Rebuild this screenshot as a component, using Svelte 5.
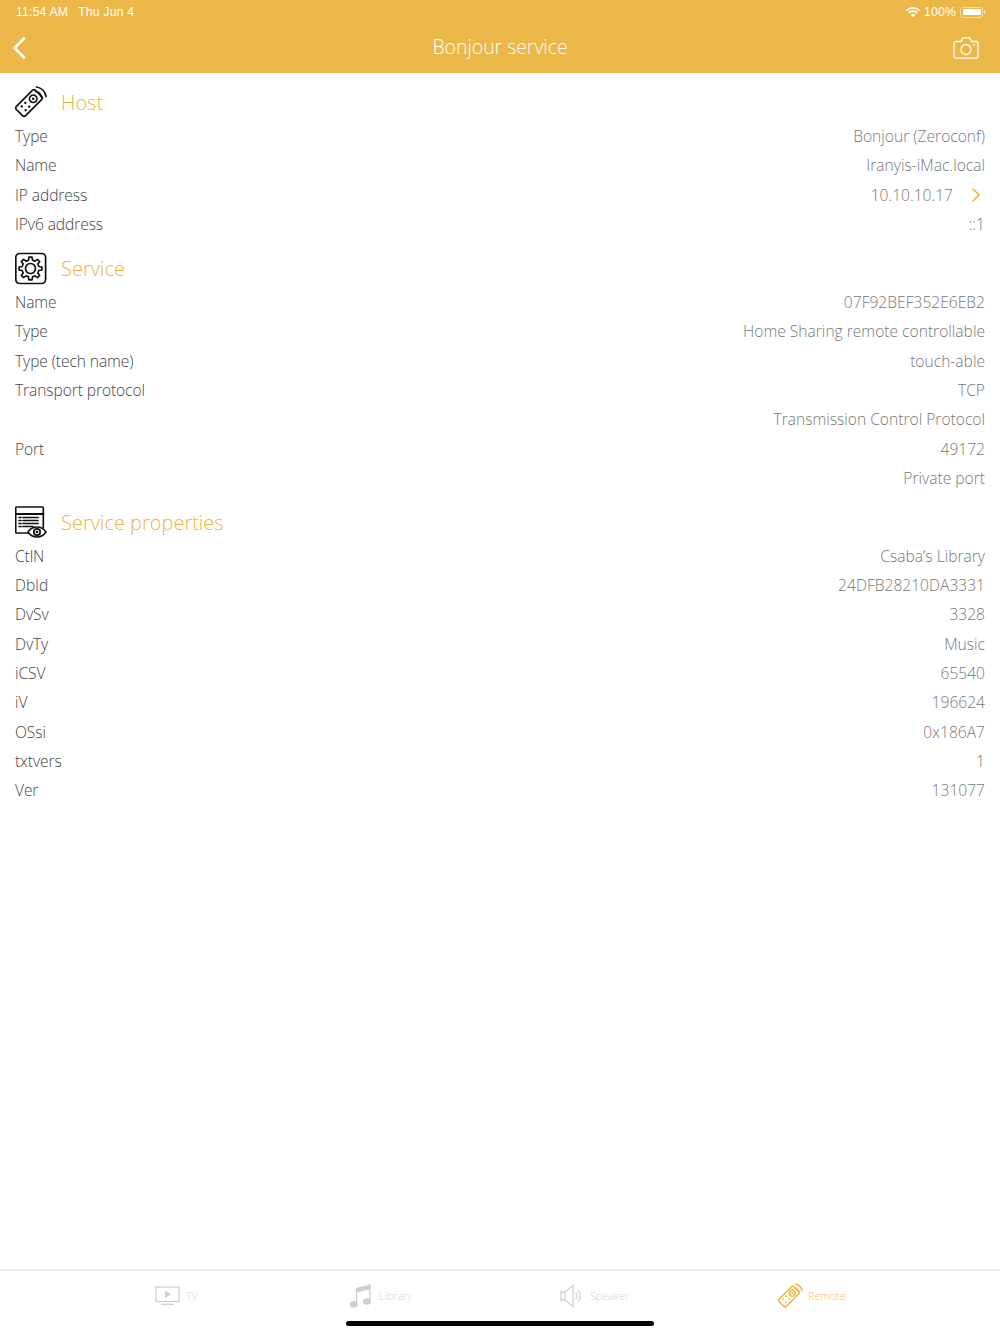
<script>
  const sections = [
    {
      title: 'Host',
      icon: 'remote',
      rows: [
        ['Type', 'Bonjour (Zeroconf)'],
        ['Name', 'Iranyis-iMac.local'],
        ['IP address', '10.10.10.17', true],
        ['IPv6 address', '::1']
      ]
    },
    {
      title: 'Service',
      icon: 'gear',
      rows: [
        ['Name', '07F92BEF352E6EB2'],
        ['Type', 'Home Sharing remote controllable'],
        ['Type (tech name)', 'touch-able'],
        ['Transport protocol', 'TCP'],
        ['', 'Transmission Control Protocol'],
        ['Port', '49172'],
        ['', 'Private port']
      ]
    },
    {
      title: 'Service properties',
      icon: 'list',
      rows: [
        ['CtlN', 'Csaba’s Library'],
        ['DbId', '24DFB28210DA3331'],
        ['DvSv', '3328'],
        ['DvTy', 'Music'],
        ['iCSV', '65540'],
        ['iV', '196624'],
        ['OSsi', '0x186A7'],
        ['txtvers', '1'],
        ['Ver', '131077']
      ]
    }
  ];

  // outline of an 8 tooth cog
  function gearPath(cx, cy, outer, inner) {
    const teeth = 8;
    const step = (Math.PI * 2) / teeth;
    let d = '';
    for (let i = 0; i < teeth; i++) {
      const a = i * step - Math.PI / 2;
      const pts = [
        [inner, a - step * 0.3],
        [outer, a - step * 0.17],
        [outer, a + step * 0.17],
        [inner, a + step * 0.3]
      ];
      for (const [r, t] of pts) {
        d += `${d ? 'L' : 'M'}${(cx + r * Math.cos(t)).toFixed(2)} ${(cy + r * Math.sin(t)).toFixed(2)}`;
      }
    }
    return d + 'z';
  }

  const gear = gearPath(15.5, 16.5, 11.5, 8.6);
</script>

{#snippet remote()}
  <g transform="rotate(45 14 17)">
    <rect x="7.500" y="3.500" width="13" height="27" rx="2.200" />
    <circle cx="14" cy="11" r="3.700" />
    <circle cx="14" cy="11" r="1.300" class="dot" />
    <circle cx="11.300" cy="19.500" r="1.200" class="dot" />
    <circle cx="16.700" cy="19.500" r="1.200" class="dot" />
    <circle cx="11.300" cy="24.500" r="1.200" class="dot" />
    <circle cx="16.700" cy="24.500" r="1.200" class="dot" />
  </g>
  <path d="M20.500 5.500a7 7 0 0 1 6 6M21.500 1a11.500 11.500 0 0 1 9.500 9.500" />
{/snippet}

<div class="page">
  <header class="top">
    <div class="status">
      <div class="clock">
        <span>11:54 AM</span>
        <span>Thu Jun 4</span>
      </div>
      <div class="levels">
        <svg width="16" height="12" viewBox="0 0 14 11" class="wifi">
          <path d="M1 4.200a8.600 8.600 0 0 1 12 0M3.100 6.300a5.600 5.600 0 0 1 7.800 0" />
          <path d="M7 10.400 4.900 8.200a3 3 0 0 1 4.200 0z" class="wifi-dot" />
        </svg>
        <span>100%</span>
        <span class="battery"><span class="charge"></span></span>
        <span class="nub"></span>
      </div>
    </div>
    <nav class="bar">
      <svg width="14" height="22" viewBox="0 0 14 22" class="back">
        <path d="M12 1.500 2.500 11l9.500 9.500" />
      </svg>
      <h1>Bonjour service</h1>
      <svg width="26" height="22" viewBox="0 0 26 22" class="camera">
        <path d="M3 4.500h5l2-3.600h6.600l2 3.600H23a2 2 0 0 1 2 2v12.600a2 2 0 0 1-2 2H3a2 2 0 0 1-2-2V6.500a2 2 0 0 1 2-2z" />
        <circle cx="13" cy="12.500" r="5" />
        <circle cx="21" cy="7.800" r="0.900" class="lens-dot" />
      </svg>
    </nav>
  </header>

  <main class="content">
    {#each sections as section}
      <section>
        <div class="head">
          <svg width="32" height="34" viewBox="0 0 32 34" class="icon">
            {#if section.icon === 'remote'}
              {@render remote()}
            {:else if section.icon === 'gear'}
              <rect x="0.800" y="1.500" width="29.800" height="30" rx="4" />
              <path d={gear} />
              <circle cx="15.500" cy="16.500" r="5" />
            {:else}
              <path d="M14 27H1.700a1 1 0 0 1-1-1V2a1 1 0 0 1 1-1h25.600a1 1 0 0 1 1 1V21.500" />
              <path d="M.7 8h27.600" stroke-width="2" />
              <path d="M4 11.500h2M8 11.500h15M4 14.500h2M8 14.500h15M4 17.500h2M8 17.500h15M4 20.500h2M8 20.500h10" />
              <path d="M13 26c2-3 5.300-5 9-5s7 2 9 5c-2 3-5.300 5-9 5s-7-2-9-5z" class="eye" />
              <circle cx="22" cy="26" r="3.200" />
              <circle cx="22" cy="26" r="1.300" class="dot" />
            {/if}
          </svg>
          <h2>{section.title}</h2>
        </div>
        {#each section.rows as [label, value, link]}
          <div class="row">
            <span class="label">{label}</span>
            <span class="value" class:linked={link}>{value}</span>
            {#if link}
              <svg width="10" height="16" viewBox="0 0 10 16" class="chevron">
                <path d="M1.500 1.500 8 8l-6.500 6.500" />
              </svg>
            {/if}
          </div>
        {/each}
      </section>
    {/each}
  </main>

  <footer class="tabs">
    <div class="tab">
      <svg width="26" height="20" viewBox="0 0 26 20" class="tab-icon">
        <rect x="1" y="1" width="23" height="14.500" />
        <path d="M10 4.500 16 8.200l-6 3.700z" class="play" />
        <path d="M6 18.300h13" />
      </svg>
      <span>TV</span>
    </div>
    <div class="tab library">
      <svg width="24" height="26" viewBox="0 0 24 26" class="tab-icon">
        <path d="M7.500 21V5.500L21 2v16" class="note" />
        <path d="M7 5.500 21.500 1.500V6L7 10z" class="play" />
        <ellipse cx="4.800" cy="21.500" rx="4" ry="3.300" class="play" />
        <ellipse cx="18" cy="18.500" rx="4" ry="3.300" class="play" />
      </svg>
      <span>Library</span>
    </div>
    <div class="tab speaker">
      <svg width="24" height="24" viewBox="0 0 24 24" class="tab-icon">
        <path d="M1 8h4v8H1zM5 8l8-6.500v21L5 16" />
        <path d="M15.500 8.500a5 5 0 0 1 0 7M18 6a9 9 0 0 1 0 12" />
      </svg>
      <span>Speaker</span>
    </div>
    <div class="tab remote">
      <svg width="25" height="27" viewBox="0 0 32 34" class="tab-icon">
        {@render remote()}
      </svg>
      <span>Remote</span>
    </div>
  </footer>
  <div class="home"></div>
</div>

<style>
  :global(body) {
    margin: 0;
    background: #fff;
  }

  .page {
    position: relative;
    display: flex;
    flex-direction: column;
    height: 1334px;
    overflow: hidden;
    font-family: 'Open Sans', sans-serif;
    font-weight: 300;
  }

  .top {
    height: 73px;
    flex: none;
    background: #ebb748;
    color: #fff;
  }

  .status {
    display: flex;
    justify-content: space-between;
    align-items: center;
    height: 24px;
    padding: 0 15px 0 16px;
    font-family: 'Liberation Sans', sans-serif;
    font-size: 12.200px;
    letter-spacing: 0.200px;
    font-weight: 400;
  }

  .clock {
    display: flex;
    gap: 10px;
  }

  .levels {
    display: flex;
    align-items: center;
    gap: 4px;
  }

  .wifi {
    margin-right: -1px;
  }

  .wifi path {
    fill: none;
    stroke: #fff;
    stroke-width: 1.600;
  }

  .wifi .wifi-dot {
    fill: #fff;
    stroke: none;
  }

  .battery {
    display: block;
    width: 23px;
    height: 11px;
    padding: 1.500px;
    box-sizing: border-box;
    border: 1px solid rgba(255, 255, 255, 0.5);
    border-radius: 3px;
  }

  .charge {
    display: block;
    height: 100%;
    background: #fff;
    border-radius: 1.500px;
  }

  .nub {
    width: 1px;
    height: 4px;
    margin-left: -3px;
    background: rgba(255, 255, 255, 0.5);
  }

  .bar {
    display: grid;
    grid-template-columns: 1fr auto 1fr;
    align-items: center;
    height: 49px;
    padding: 0 21px 2px 12px;
    box-sizing: border-box;
  }

  .bar h1 {
    margin: 0 0 3px;
    font-size: 19.400px;
    font-weight: 300;
    color: #fff;
    transform: translateX(4.500px);
  }

  .camera {
    justify-self: end;
  }

  .back path {
    fill: none;
    stroke: #fff;
    stroke-width: 2.600;
    stroke-linecap: round;
    stroke-linejoin: round;
  }

  .camera path,
  .camera circle {
    fill: none;
    stroke: #fff;
    stroke-width: 1.300;
  }

  .camera .lens-dot {
    fill: #fff;
    stroke: none;
  }

  .content {
    flex: 1;
    padding: 11.250px 15px 0;
  }

  section + section {
    margin-top: 11.670px;
  }

  .head {
    display: flex;
    align-items: center;
    gap: 14px;
    height: 37px;
  }

  .icon {
    flex: none;
    fill: none;
    stroke: #111;
    stroke-width: 1.700;
    stroke-linejoin: round;
    stroke-linecap: round;
  }

  .icon .eye {
    fill: #fff;
  }

  .icon :global(.dot) {
    fill: #111;
    stroke: none;
  }

  .head h2 {
    margin: 0;
    font-size: 20px;
    font-weight: 300;
    color: #f0b13c;
  }

  .row {
    display: flex;
    align-items: center;
    height: 29.330px;
    font-size: 15.600px;
    color: #444;
  }

  .label {
    flex: 1;
    letter-spacing: -0.100px;
  }

  .value {
    color: #777;
  }

  .value.linked {
    margin-right: 18px;
  }

  .chevron {
    margin-right: 4px;
  }

  .chevron path {
    fill: none;
    stroke: #f0b13c;
    stroke-width: 1.500;
  }

  .tabs {
    display: grid;
    grid-template-columns: 194px 211px 218px 1fr;
    height: 63px;
    flex: none;
    padding-left: 155px;
    border-top: 2px solid #e8e8e8;
  }

  .tab {
    display: flex;
    align-items: center;
    gap: 5px;
    height: 50px;
    font-size: 10.700px;
    color: #d4d4d4;
  }

  .tab-icon {
    flex: none;
    fill: none;
    stroke: #cfcfcf;
    stroke-width: 1.300;
  }

  .tab-icon .play {
    fill: #cfcfcf;
    stroke: none;
  }

  .library {
    gap: 6px;
  }

  .speaker {
    gap: 6px;
  }

  .remote {
    gap: 5px;
    color: #f0bf66;
  }

  .remote .tab-icon {
    stroke: #f0b13c;
    stroke-width: 1.800;
  }

  .remote .tab-icon :global(.dot) {
    fill: #f0b13c;
    stroke: none;
  }

  .home {
    position: absolute;
    left: 346px;
    bottom: 8px;
    width: 308px;
    height: 5px;
    border-radius: 3px;
    background: #000;
  }
</style>
